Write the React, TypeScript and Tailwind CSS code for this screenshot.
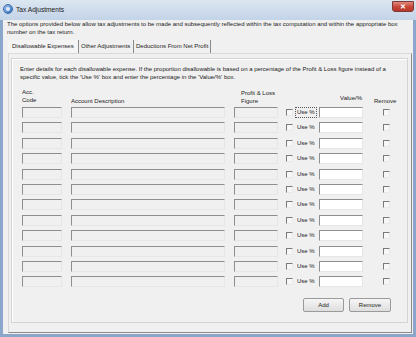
import React from 'react';

const rows = Array.from({ length: 12 }, (_, i) => i);

const Sunken: React.FC<{ className?: string; white?: boolean }> = ({ className = '', white }) => (
  <div
    className={`h-[11px] border-t border-l border-t-[#8e8e8e] border-l-[#8e8e8e] border-b border-r border-b-[#e6e6e6] border-r-[#e6e6e6] ${
      white ? 'bg-white' : 'bg-[#f0f0f0]'
    } ${className}`}
  />
);

const Check: React.FC<{ className?: string }> = ({ className = '' }) => (
  <div
    className={`w-[7px] h-[7px] border-t border-l border-t-[#7a7a7a] border-l-[#7a7a7a] border-b border-r border-b-[#e9e9e9] border-r-[#e9e9e9] bg-[#f7f7f7] ${className}`}
  />
);

const App: React.FC = () => {
  return (
    <div
      className="w-[416px] h-[337px] overflow-hidden flex flex-col bg-[#8aa6cb] text-[#222] text-[6px]"
      style={{ fontFamily: '"Liberation Sans", Arial, sans-serif' }}
    >
      {/* Title bar */}
      <div className="h-[20px] shrink-0 flex items-start bg-gradient-to-b from-[#dde7f2] via-[#cfdcec] to-[#c3d4e8]">
        <div className="mt-[4px] ml-[3px] w-[10px] h-[10px] rounded-full bg-gradient-to-br from-[#9fc4ec] to-[#2d6cbf] border border-[#3c6aa6] flex items-center justify-center">
          <div className="w-[4px] h-[4px] rounded-full bg-white/80" />
        </div>
        <span className="ml-[3px] mt-[5px] text-[6.6px] leading-[9px] text-[#1a1a1a]">Tax Adjustments</span>
        <div className="ml-auto mr-[2px] mt-[1px] w-[22px] h-[11px] rounded-b-[3px] bg-gradient-to-b from-[#e08a7e] via-[#c8483a] to-[#b7382b] border border-[#7d3a33] flex items-center justify-center text-white text-[7px] font-bold leading-none">
          ✕
        </div>
      </div>

      {/* Client area */}
      <div className="flex-1 mx-[3px] mb-[3px] bg-[#f0f0f0] flex flex-col">
        <p className="pl-[4px] pt-[1px] pr-[10px] leading-[7.5px]">
          The options provided below allow tax adjustments to be made and subsequently reflected within the tax computation and within the appropriate box number on the tax return.
        </p>

        {/* Tabs */}
        <div className="mt-[4px] ml-[5px] h-[13px] flex items-stretch">
          <div className="w-[70px] pl-[4px] flex items-center bg-[#f4f4f4]">Disallowable Expenses</div>
          <div className="w-[55px] pl-[2px] flex items-center border-l border-[#8a8a8a]">Other Adjustments</div>
          <div className="w-[78px] pl-[2px] flex items-center border-l border-r border-[#8a8a8a]">Deductions From Net Profit</div>
        </div>

        {/* Tab page */}
        <div className="flex-1 ml-[5px] mr-[1px] mb-[1px] border border-t-[#d9d9d9] border-l-[#d9d9d9] border-r-[#8c8c8c] border-b-[#8c8c8c] pt-[4px] pl-[2px] pr-[3px] pb-[9px] flex">
          <div className="flex-1 border border-[#d4d4d4] shadow-[inset_1px_1px_0_#fff] flex flex-col">
            <p className="pl-[8px] pt-[6px] leading-[8px] pr-[20px]">
              Enter details for each disallowable expense. If the proportion disallowable is based on a percentage of the Profit &amp; Loss figure instead of a specific value, tick the 'Use %' box and enter the percentage in the 'Value/%' box.
            </p>

            {/* Header */}
            <div className="mt-[7px] h-[19px] pl-[10px] flex items-start leading-[8px]">
              <div className="w-[40px]">
                <div>Acc.</div>
                <div>Code</div>
              </div>
              <div className="ml-[9px] w-[154px] mt-[9px]">Account Description</div>
              <div className="ml-[9px] w-[44px] pl-[7px] mt-[1px]">
                <div>Profit &amp; Loss</div>
                <div>Figure</div>
              </div>
              <div className="ml-[8px] w-[7px]" />
              <div className="ml-[2px] w-[22px]" />
              <div className="ml-[2px] w-[44px] mt-[6px] text-right pr-[1px]">Value/%</div>
              <div className="ml-[11px] mt-[9px]">Remove</div>
            </div>

            {/* Rows */}
            <div className="pl-[10px] flex flex-col">
              {rows.map((i) => (
                <div key={i} className="h-[15.4px] flex items-start">
                  <Sunken className="w-[40px]" />
                  <Sunken className="ml-[9px] w-[154px]" />
                  <Sunken className="ml-[9px] w-[44px]" />
                  <Check className="ml-[8px] mt-[2px]" />
                  <div
                    className={`ml-[2px] w-[22px] h-[11px] flex items-center pl-[1px] ${
                      i === 0 ? 'border border-dotted border-[#555]' : 'border border-transparent'
                    }`}
                  >
                    Use %
                  </div>
                  <Sunken white className="ml-[2px] w-[44px]" />
                  <Check className="ml-[20px] mt-[2px]" />
                </div>
              ))}
            </div>

            {/* Buttons */}
            <div className="mt-[6px] pr-[16px] flex justify-end gap-[5px]">
              <button className="w-[41px] h-[14px] rounded-[2px] border border-[#9a9a9a] bg-gradient-to-b from-[#f6f6f6] to-[#dedede] text-[6px] leading-none">
                Add
              </button>
              <button className="w-[42px] h-[14px] rounded-[2px] border border-[#9a9a9a] bg-gradient-to-b from-[#f6f6f6] to-[#dedede] text-[6px] leading-none">
                Remove
              </button>
            </div>
          </div>
        </div>
      </div>
    </div>
  );
};

export default App;
